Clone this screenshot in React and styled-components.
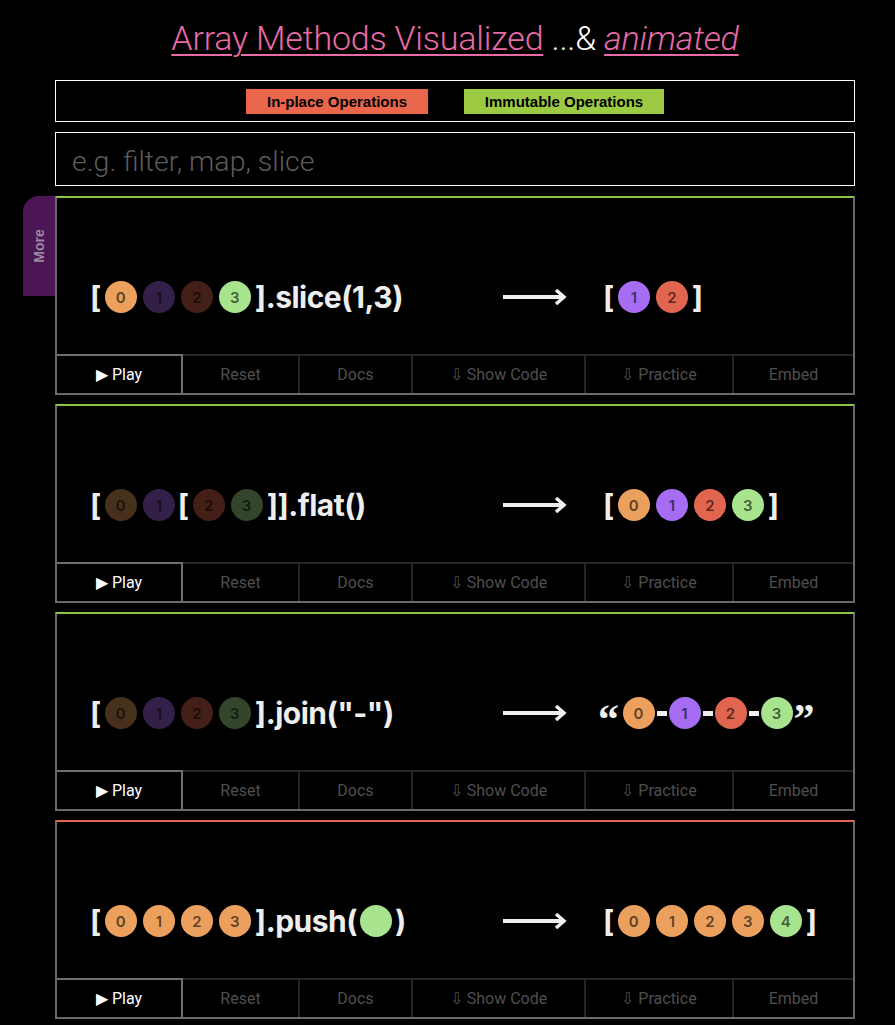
import React from "react";
import styled, { createGlobalStyle, css } from "styled-components";

const GlobalStyle = createGlobalStyle`
  html, body {
    margin: 0;
    padding: 0;
    background: #000;
  }
  body {
    font-family: Roboto, "Liberation Sans", sans-serif;
    color: #fff;
  }
`;

const COLORS = {
  orange: "#eba05e",
  purple: "#a66cf2",
  red: "#e2664f",
  green: "#a8e38e",
};

const Page = styled.div`
  width: 800px;
  margin-left: 55px;
  padding-bottom: 20px;
`;

const Title = styled.h1`
  margin: 0 0 22px;
  padding-top: 18px;
  height: 40px;
  line-height: 40px;
  text-align: center;
  font-family: Roboto, "Liberation Sans", sans-serif;
  font-weight: 300;
  font-size: 34px;
  letter-spacing: -0.2px;
  color: #fff;
  a {
    color: #e86ba8;
    text-decoration: underline;
    text-decoration-thickness: 1.5px;
    text-underline-offset: 4px;
  }
  em a {
    font-style: italic;
  }
`;

const Legend = styled.div`
  display: flex;
  justify-content: center;
  gap: 36px;
  height: 40px;
  align-items: center;
  border: 1px solid #fff;
`;

const Tag = styled.span`
  display: flex;
  align-items: center;
  justify-content: center;
  width: ${(p) => p.$w}px;
  height: 25px;
  background: ${(p) => p.$bg};
  color: #000;
  font-family: "Liberation Sans", Arial, sans-serif;
  font-weight: 700;
  font-size: 15px;
`;

const Search = styled.input`
  display: block;
  box-sizing: border-box;
  width: 100%;
  height: 54px;
  margin: 10px 0;
  padding: 4px 16px 0;
  border: 1px solid #fff;
  background: #000;
  outline: none;
  font-family: Roboto, "Liberation Sans", sans-serif;
  font-weight: 300;
  font-size: 28.5px;
  color: #fff;
  &::placeholder {
    color: #5c5c5c;
  }
`;

const Card = styled.section`
  position: relative;
  box-sizing: border-box;
  height: 199px;
  margin-bottom: 9px;
  border: 2px solid #6a6a6a;
  border-top-color: ${(p) => p.$accent};
  display: flex;
  flex-direction: column;
`;

const MoreTab = styled.div`
  position: absolute;
  left: -34px;
  top: -2px;
  width: 32px;
  height: 100px;
  background: #4c1556;
  border-top-left-radius: 16px;
  display: flex;
  align-items: center;
  justify-content: center;
  span {
    transform: rotate(-90deg);
    font-family: "Liberation Sans", Arial, sans-serif;
    font-weight: 700;
    font-size: 14px;
    color: #9a8a9e;
  }
`;

const Stage = styled.div`
  flex: 1;
  padding: 79px 0 0 33px;
`;

const ExprRow = styled.div`
  display: flex;
  align-items: center;
  height: 40px;
`;

const Left = styled.div`
  width: 413px;
  display: flex;
  align-items: center;
`;

const Right = styled.div`
  display: flex;
  align-items: center;
  margin-left: ${(p) => (p.$quote ? 31 : 36)}px;
`;

const Code = styled.span`
  font-family: Inter, "Liberation Sans", sans-serif;
  font-weight: 700;
  font-size: 30px;
  letter-spacing: -0.5px;
  color: #eee;
  line-height: 40px;
  white-space: pre;
`;

const Bracket = styled(Code)`
  margin: 0 ${(p) => (p.$close ? 0 : 1)}px 0 ${(p) => (p.$close ? 1 : 0)}px;
`;

const Quote = styled(Code)`
  font-family: "Liberation Serif", serif;
  font-size: 42px;
  line-height: 40px;
  margin-top: 12px;
  ${(p) =>
    p.$close
      ? css`
          margin-left: 1px;
        `
      : css`
          margin-right: 4px;
        `}
`;

const Ball = styled.span`
  display: inline-flex;
  align-items: center;
  justify-content: center;
  flex-shrink: 0;
  width: 32px;
  height: 32px;
  margin: 0 ${(p) => (p.$tight ? 0 : 3)}px;
  border-radius: 50%;
  background: ${(p) => COLORS[p.$c]};
  opacity: ${(p) => (p.$dim ? 0.3 : 1)};
  color: rgba(0, 0, 0, 0.62);
  font-family: Inter, "Liberation Sans", sans-serif;
  font-weight: 600;
  font-size: 15px;
`;

const Dash = styled.span`
  display: inline-block;
  width: 10px;
  height: 5px;
  margin: 0 2px;
  background: #eee;
`;

const ArrowBox = styled.div`
  width: 64px;
  height: 20px;
  display: flex;
  align-items: center;
`;

const Controls = styled.div`
  display: flex;
  height: 37px;
  border-top: 2px solid #262626;
`;

const Btn = styled.button`
  box-sizing: border-box;
  width: ${(p) => p.$w}px;
  height: 100%;
  margin: 0;
  padding: 0;
  background: #000;
  border: none;
  border-right: 2px solid #262626;
  font-family: Roboto, "Liberation Sans", sans-serif;
  font-size: 16px;
  color: #4f4f4f;
  &:last-child {
    border-right: none;
  }
  ${(p) =>
    p.$active &&
    css`
      color: #fff;
      border: 2px solid #6f6f6f;
      border-bottom: none;
      border-left: none;
      margin-top: -2px;
      height: calc(100% + 2px);
    `}
`;

const Arrow = () => (
  <ArrowBox>
    <svg width="64" height="20" viewBox="0 0 64 20">
      <path d="M0 10 H60" stroke="#eee" strokeWidth="4" />
      <path d="M53 3 L61 10 L53 17" stroke="#eee" strokeWidth="3.5" fill="none" />
    </svg>
  </ArrowBox>
);

const Balls = ({ items }) =>
  items.map(([c, n, dim], i) => (
    <Ball key={i} $c={c} $dim={dim}>
      {n}
    </Ball>
  ));

const BUTTONS = [
  ["▶ Play", 126, true],
  ["Reset", 117],
  ["Docs", 113],
  ["⇩ Show Code", 173],
  ["⇩ Practice", 148],
  ["Embed", 119],
];

const ControlBar = () => (
  <Controls>
    {BUTTONS.map(([label, w, active]) => (
      <Btn key={label} $w={w} $active={active}>
        {label}
      </Btn>
    ))}
  </Controls>
);

const MethodCard = ({ accent, more, left, right, quote }) => (
  <Card $accent={accent}>
    {more && (
      <MoreTab>
        <span>More</span>
      </MoreTab>
    )}
    <Stage>
      <ExprRow>
        <Left>{left}</Left>
        <Arrow />
        <Right $quote={quote}>{right}</Right>
      </ExprRow>
    </Stage>
    <ControlBar />
  </Card>
);

const GREEN = "#8cc34b";
const RED = "#e2664f";

export default function App() {
  return (
    <>
      <GlobalStyle />
      <Page>
        <Title>
          <a href="#top">Array Methods Visualized</a> ...&amp;{" "}
          <em>
            <a href="#top">animated</a>
          </em>
        </Title>

        <Legend>
          <Tag $bg="#e9654b" $w={182}>
            In-place Operations
          </Tag>
          <Tag $bg="#9dca43" $w={200}>
            Immutable Operations
          </Tag>
        </Legend>

        <Search placeholder="e.g. filter, map, slice" />

        <MethodCard
          accent={GREEN}
          more
          left={
            <>
              <Bracket>[</Bracket>
              <Balls
                items={[
                  ["orange", 0],
                  ["purple", 1, true],
                  ["red", 2, true],
                  ["green", 3],
                ]}
              />
              <Bracket $close>]</Bracket>
              <Code>.slice(1,3)</Code>
            </>
          }
          right={
            <>
              <Bracket>[</Bracket>
              <Balls
                items={[
                  ["purple", 1],
                  ["red", 2],
                ]}
              />
              <Bracket $close>]</Bracket>
            </>
          }
        />

        <MethodCard
          accent={GREEN}
          left={
            <>
              <Bracket>[</Bracket>
              <Balls
                items={[
                  ["orange", 0, true],
                  ["purple", 1, true],
                ]}
              />
              <Bracket>[</Bracket>
              <Balls
                items={[
                  ["red", 2, true],
                  ["green", 3, true],
                ]}
              />
              <Bracket $close>]]</Bracket>
              <Code>.flat()</Code>
            </>
          }
          right={
            <>
              <Bracket>[</Bracket>
              <Balls
                items={[
                  ["orange", 0],
                  ["purple", 1],
                  ["red", 2],
                  ["green", 3],
                ]}
              />
              <Bracket $close>]</Bracket>
            </>
          }
        />

        <MethodCard
          accent={GREEN}
          quote
          left={
            <>
              <Bracket>[</Bracket>
              <Balls
                items={[
                  ["orange", 0, true],
                  ["purple", 1, true],
                  ["red", 2, true],
                  ["green", 3, true],
                ]}
              />
              <Bracket $close>]</Bracket>
              <Code>.join("-")</Code>
            </>
          }
          right={
            <>
              <Quote>“</Quote>
              <Ball $c="orange" $tight>0</Ball>
              <Dash />
              <Ball $c="purple" $tight>1</Ball>
              <Dash />
              <Ball $c="red" $tight>2</Ball>
              <Dash />
              <Ball $c="green" $tight>3</Ball>
              <Quote $close>”</Quote>
            </>
          }
        />

        <MethodCard
          accent={RED}
          left={
            <>
              <Bracket>[</Bracket>
              <Balls
                items={[
                  ["orange", 0],
                  ["orange", 1],
                  ["orange", 2],
                  ["orange", 3],
                ]}
              />
              <Bracket $close>]</Bracket>
              <Code>.push(</Code>
              <Ball $c="green" />
              <Code>)</Code>
            </>
          }
          right={
            <>
              <Bracket>[</Bracket>
              <Balls
                items={[
                  ["orange", 0],
                  ["orange", 1],
                  ["orange", 2],
                  ["orange", 3],
                  ["green", 4],
                ]}
              />
              <Bracket $close>]</Bracket>
            </>
          }
        />
      </Page>
    </>
  );
}
